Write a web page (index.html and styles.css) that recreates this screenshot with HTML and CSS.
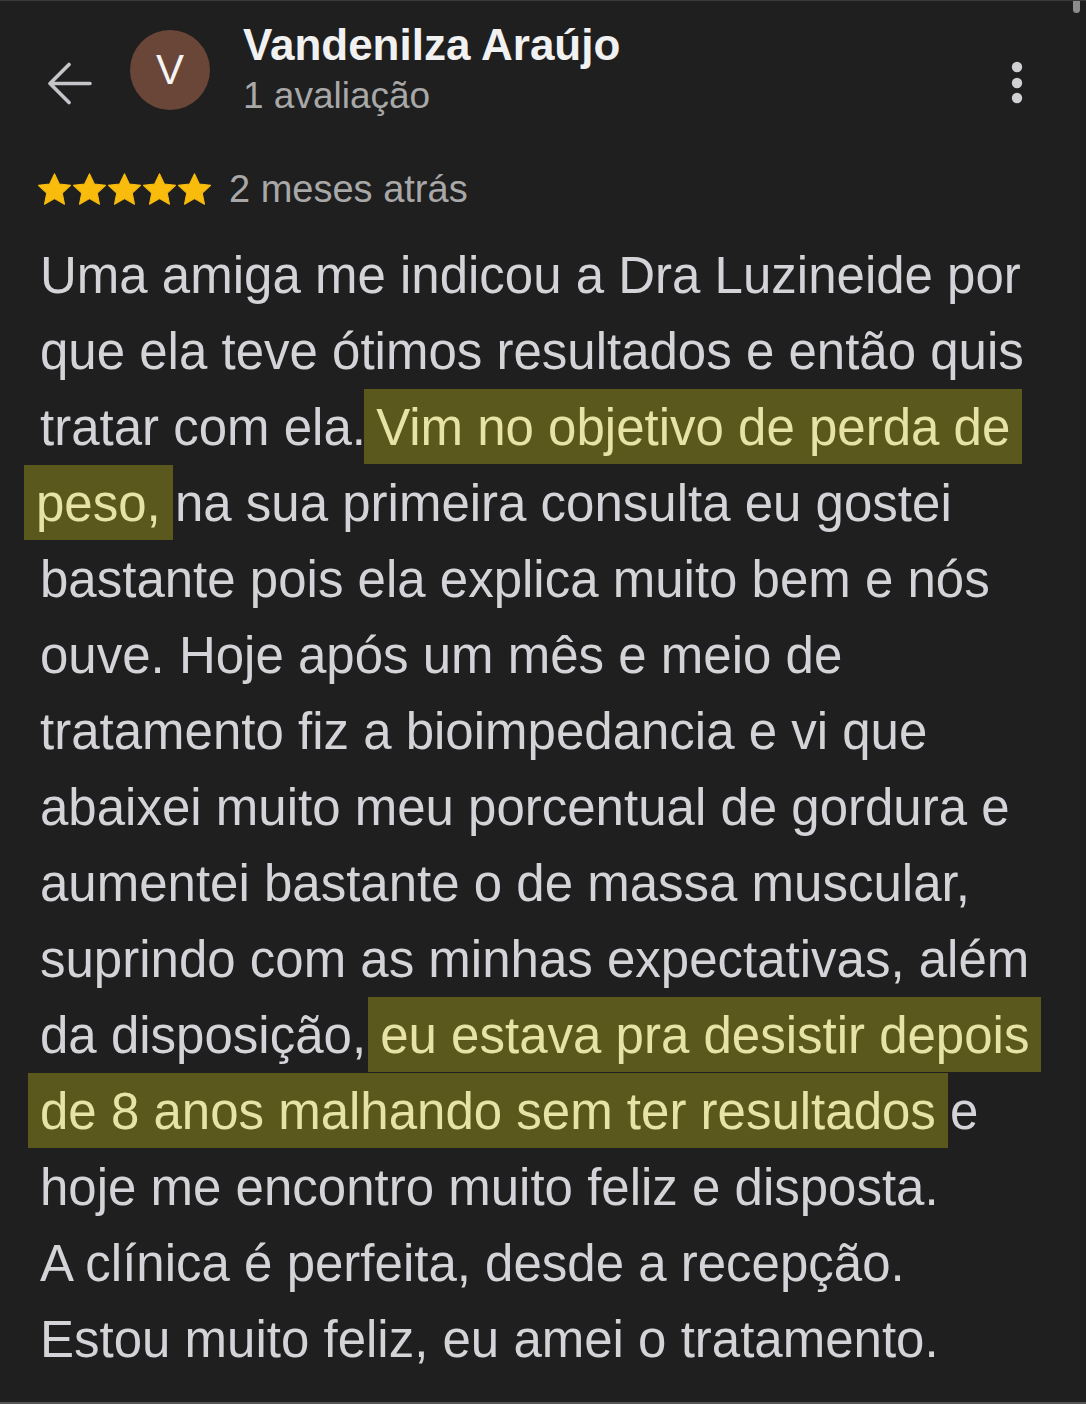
FILE: index.html
```
<!DOCTYPE html>
<html lang="pt-BR">
<head>
<meta charset="utf-8">
<title>Vandenilza Araújo - avaliação</title>
<link rel="stylesheet" href="styles.css">
</head>
<body>
<div class="screen">
	<div class="scroll-thumb"></div>

	<!-- top bar: back, avatar, reviewer name, menu -->
	<div class="top-bar">
		<svg class="back" width="46" height="44" viewBox="0 0 46 44">
			<path d="M44 21.5H4M23 2.5L4 21.5L23 40.5" fill="none" stroke="#c6c6ca" stroke-width="3.6" stroke-linecap="round" stroke-linejoin="round"/>
		</svg>
		<div class="avatar">V</div>
		<div class="who">
			<div class="name">Vandenilza Araújo</div>
			<div class="count">1 avaliação</div>
		</div>
		<svg class="menu" width="14" height="46" viewBox="0 0 14 46">
			<circle cx="7" cy="6" r="5.2" fill="#d0d0d2"/>
			<circle cx="7" cy="22" r="5.2" fill="#d0d0d2"/>
			<circle cx="7" cy="37" r="5.2" fill="#d0d0d2"/>
		</svg>
	</div>

	<!-- rating + date -->
	<div class="rating">
		<div class="stars">
			<svg width="33" height="32" viewBox="2.3 2.3 19.4 18.6"><path d="M12 2.6l2.85 6.05 6.6.78-4.88 4.55 1.3 6.55L12 17.25l-5.87 3.28 1.3-6.55L2.55 9.43l6.6-.78z"/></svg>
			<svg width="33" height="32" viewBox="2.3 2.3 19.4 18.6"><path d="M12 2.6l2.85 6.05 6.6.78-4.88 4.55 1.3 6.55L12 17.25l-5.87 3.28 1.3-6.55L2.55 9.43l6.6-.78z"/></svg>
			<svg width="33" height="32" viewBox="2.3 2.3 19.4 18.6"><path d="M12 2.6l2.85 6.05 6.6.78-4.88 4.55 1.3 6.55L12 17.25l-5.87 3.28 1.3-6.55L2.55 9.43l6.6-.78z"/></svg>
			<svg width="33" height="32" viewBox="2.3 2.3 19.4 18.6"><path d="M12 2.6l2.85 6.05 6.6.78-4.88 4.55 1.3 6.55L12 17.25l-5.87 3.28 1.3-6.55L2.55 9.43l6.6-.78z"/></svg>
			<svg width="33" height="32" viewBox="2.3 2.3 19.4 18.6"><path d="M12 2.6l2.85 6.05 6.6.78-4.88 4.55 1.3 6.55L12 17.25l-5.87 3.28 1.3-6.55L2.55 9.43l6.6-.78z"/></svg>
		</div>
		<span class="when">2 meses atrás</span>
	</div>

	<!-- review body -->
	<p class="review">Uma amiga me indicou a Dra Luzineide por<br>
que ela teve ótimos resultados e então quis<br>
tratar com ela. <span class="mark mark-a">Vim no objetivo de perda de<br>peso,</span> na sua primeira consulta eu gostei<br>
bastante pois ela explica muito bem e nós<br>
ouve. Hoje após um mês e meio de<br>
tratamento fiz a bioimpedancia e vi que<br>
abaixei muito meu porcentual de gordura e<br>
aumentei bastante o de massa muscular,<br>
suprindo com as minhas expectativas, além<br>
da disposição, <span class="mark">eu estava pra desistir depois<br>de 8 anos malhando sem ter resultados</span> e<br>
hoje me encontro muito feliz e disposta.<br>
A clínica é perfeita, desde a recepção.<br>
Estou muito feliz, eu amei o tratamento.</p>
</div>
</body>
</html>
```

FILE: styles.css
```
html, body {
	margin: 0;
	padding: 0;
	background: #1f1f1f;
}

body {
	font-family: "Liberation Sans", Arial, sans-serif;
}

.screen {
	position: relative;
	height: 1404px;
	box-sizing: border-box;
	border-top: 1px solid #3a3a3a;
	border-bottom: 2px solid #575757;
	overflow: hidden;
}

.scroll-thumb {
	position: absolute;
	top: -4px;
	left: 1073px;
	width: 7px;
	height: 16px;
	border-radius: 4px;
	background: #8c8c8c;
}

/* header */
.top-bar {
	display: flex;
	align-items: flex-start;
	padding-top: 19px;
}

.back {
	margin-left: 46px;
	margin-top: 42px;
}

.avatar {
	width: 80px;
	height: 80px;
	margin-left: 38px;
	margin-top: 10px;
	border-radius: 50%;
	background: #6a4638;
	color: #f4f4f4;
	font-size: 42px;
	line-height: 80px;
	text-align: center;
}

.who {
	margin-left: 33px;
}

.name {
	color: #f1f1f1;
	font-size: 44px;
	font-weight: bold;
	line-height: 50px;
}

.count {
	color: #a8a8a8;
	font-size: 37px;
	line-height: 51px;
}

.menu {
	margin-left: auto;
	margin-right: 62px;
	margin-top: 41px;
}

/* stars row */
.rating {
	display: flex;
	align-items: center;
	height: 40px;
	margin-top: 48px;
	padding-left: 38px;
}

.stars {
	display: flex;
	gap: 2px;
}

.stars svg {
	fill: #f9bb0c;
	stroke: #f9bb0c;
	stroke-width: 0.6;
	stroke-linejoin: round;
}

.when {
	margin-left: 18px;
	color: #a8a8a8;
	font-size: 38px;
	line-height: 40px;
}

/* text */
.review {
	margin: 29px 0 0;
	padding-left: 40px;
	color: #d4d4d8;
	font-size: 51px;
	line-height: 76px;
	white-space: nowrap;
}

.mark {
	color: #e7e3a6;
	background: #5b581e;
	padding: 10px 0 8px;
	box-shadow: -12px 0 0 #5b581e, 12px 0 0 #5b581e;
	-webkit-box-decoration-break: clone;
	box-decoration-break: clone;
}

.mark-a {
	margin-left: -4px;
}
```
